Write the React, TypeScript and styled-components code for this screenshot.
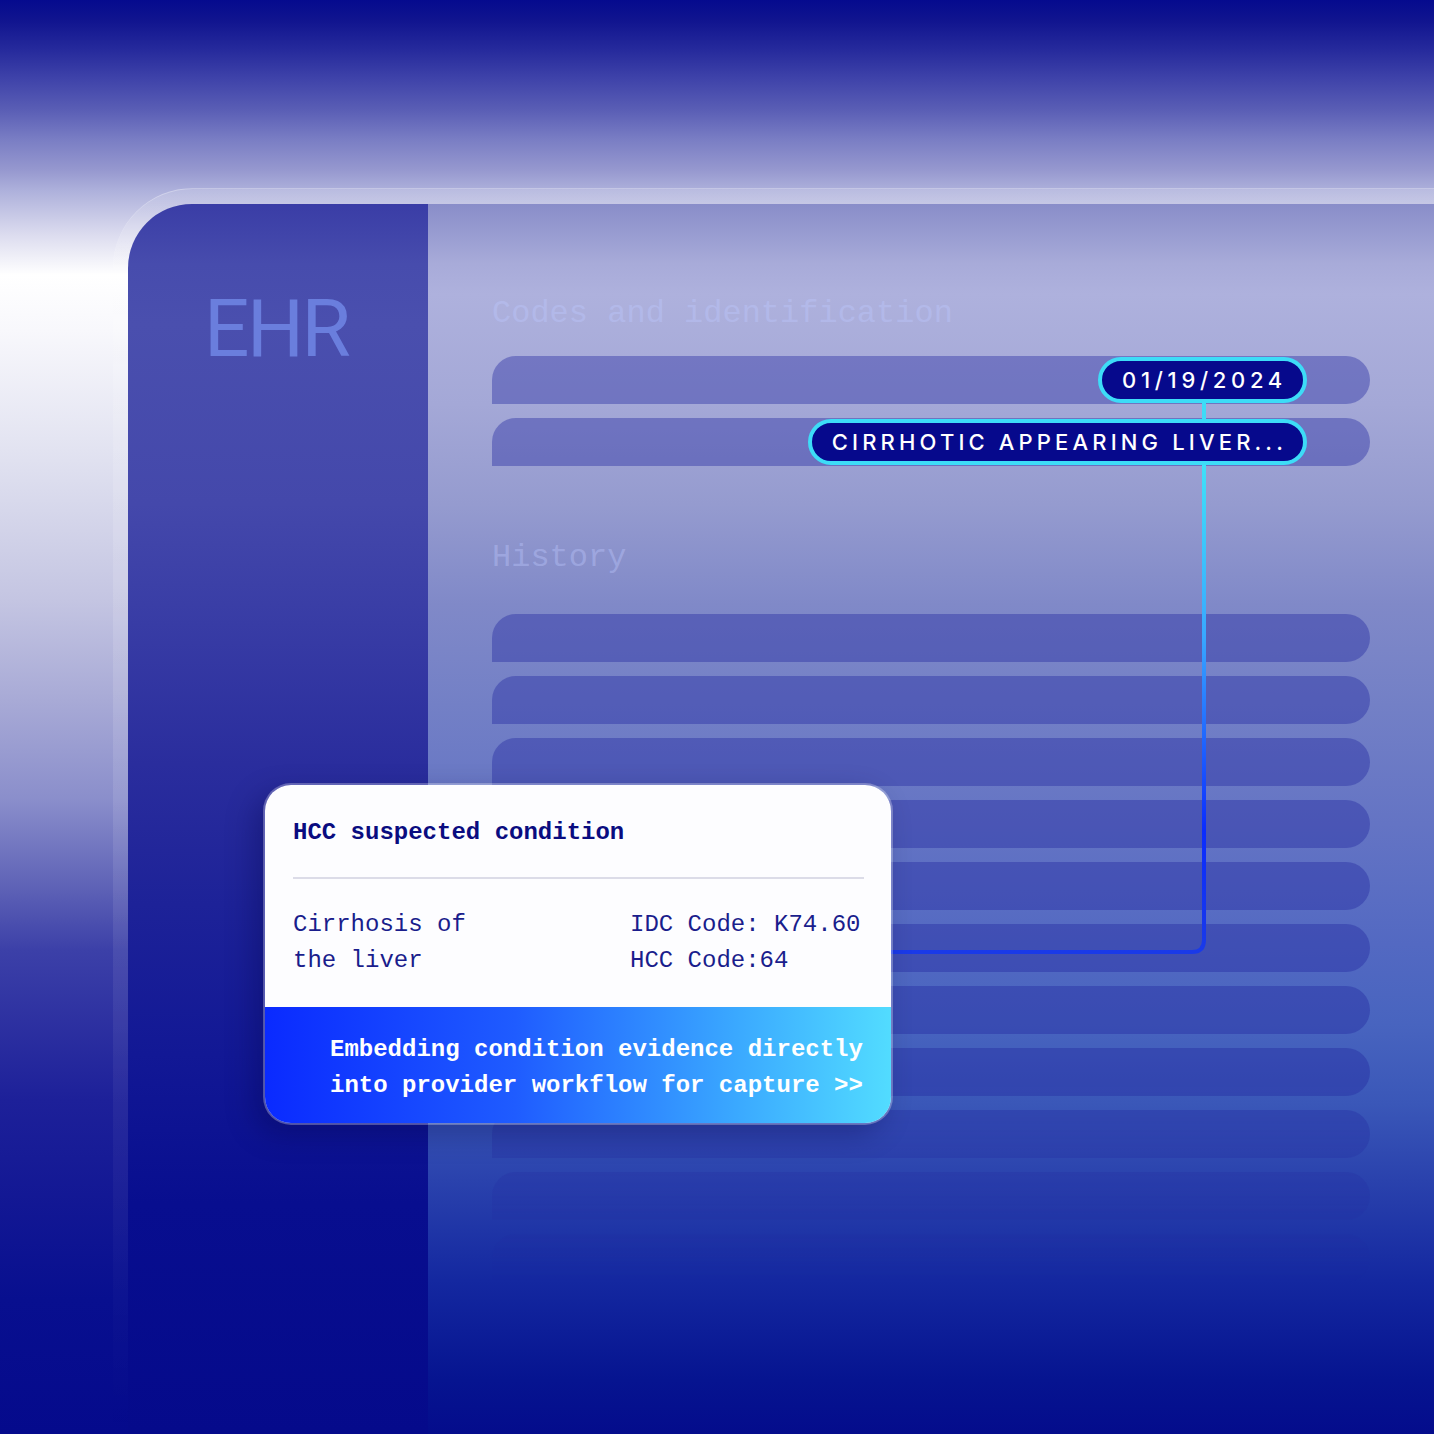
import React from 'react';
import styled, { createGlobalStyle } from 'styled-components';

const GlobalStyle = createGlobalStyle`
  html, body {
    margin: 0;
    padding: 0;
    background: #050a8c;
  }
  #root {
    width: 1434px;
    height: 1434px;
  }
`;

const Scene = styled.div`
  position: relative;
  width: 1434px;
  height: 1434px;
  overflow: hidden;
  box-sizing: border-box;
  padding: 188px 0 0 113px;
  display: flex;
  background: linear-gradient(180deg,
    #050a8e 0px, #10148f 20px, #262a9c 50px, #4044aa 80px, #5a5eb5 110px,
    #7a7ec4 140px, #9698cf 170px, #adb0db 190px, #dcdcef 235px, #ffffff 275px,
    #f8f8fc 330px, #e2e3f1 450px, #c4c5e2 600px, #a8aad6 700px, #8a8ecb 800px,
    #6266b8 880px, #3c40a8 950px, #1d2099 1100px, #080f8f 1300px, #050a8c 1434px);
`;

const GlassFrame = styled.div`
  flex: 1;
  display: flex;
  box-sizing: border-box;
  padding: 15px 0 0 15px;
  border-top: 1px solid rgba(255, 255, 255, 0.3);
  border-top-left-radius: 80px;
  background: linear-gradient(180deg,
    rgba(255, 255, 255, 0.16) 0px,
    rgba(255, 255, 255, 0.12) 500px,
    rgba(255, 255, 255, 0.05) 900px,
    rgba(255, 255, 255, 0) 1246px);
`;

const Panel = styled.div`
  flex: 1;
  display: flex;
  border-top-left-radius: 64px;
  overflow: hidden;
`;

const Sidebar = styled.div`
  width: 300px;
  flex-shrink: 0;
  box-sizing: border-box;
  padding: 85px 0 0 76px;
  background: linear-gradient(180deg,
    #3a3da6 0px, #474cad 60px, #4a4fae 120px, #4448ab 300px, #383ca5 420px,
    #2a2d9d 560px, #1d2298 700px, #121895 850px, #080e8f 1000px, #050a8b 1230px);
`;

const Logo = styled.div`
  font-family: Roboto, 'Liberation Sans', sans-serif;
  font-size: 80px;
  line-height: 1;
  letter-spacing: -2.5px;
  color: #6a7edd;
`;

const Content = styled.div`
  flex: 1;
  display: flex;
  flex-direction: column;
  box-sizing: border-box;
  padding: 94px 64px 0;
  background: linear-gradient(180deg,
    #898dc9 0px, #a8abd9 60px, #aeb1dd 90px, #a4a8d7 200px, #959bcf 300px,
    #8089c8 400px, #7380c6 500px, #6474c4 620px, #5369c2 740px, #4864bf 820px,
    #3a57b8 900px, #2a42ad 976px, #1428a0 1076px, #061490 1176px, #040c8c 1230px);
`;

const SectionTitle = styled.div<{ $gap: number }>`
  margin-top: ${(props) => props.$gap}px;
  font-family: 'Liberation Mono', 'DejaVu Sans Mono', monospace;
  font-size: 32px;
  line-height: 32px;
  color: rgba(190, 200, 255, 0.4);
`;

const BarList = styled.div<{ $gap: number }>`
  margin-top: ${(props) => props.$gap}px;
  display: flex;
  flex-direction: column;
  gap: 14px;
`;

const FadingBarList = styled(BarList)`
  -webkit-mask-image: linear-gradient(180deg, #000 0px, #000 470px, transparent 680px);
  mask-image: linear-gradient(180deg, #000 0px, #000 470px, transparent 680px);
`;

const Bar = styled.div`
  height: 48px;
  flex-shrink: 0;
  box-sizing: border-box;
  display: flex;
  justify-content: flex-end;
  align-items: center;
  padding-right: 63px;
  border-radius: 24px 24px 24px 0;
  background: rgba(35, 40, 160, 0.4);
`;

const Pill = styled.div<{ $tracking: number }>`
  height: 46px;
  box-sizing: border-box;
  display: flex;
  align-items: center;
  padding: 0 16px 0 20px;
  border: 4px solid #3ddcf7;
  border-radius: 23px;
  background: #06098c;
  color: #ffffff;
  font-family: Inter, 'Noto Sans', sans-serif;
  font-size: 22px;
  font-weight: 500;
  letter-spacing: ${(props) => props.$tracking}px;
  white-space: nowrap;
`;

const ConnectorSvg = styled.svg`
  position: absolute;
  left: 0;
  top: 0;
  pointer-events: none;
`;

const Card = styled.div`
  position: absolute;
  left: 263px;
  top: 783px;
  width: 630px;
  box-sizing: border-box;
  border: 2px solid rgba(255, 255, 255, 0.28);
  border-radius: 28px;
  background: #fdfdff;
  background-clip: padding-box;
  overflow: hidden;
  box-shadow: -10px 10px 28px rgba(0, 4, 60, 0.28);
  font-family: 'Liberation Mono', 'DejaVu Sans Mono', monospace;
  font-size: 24px;
  line-height: 36px;
`;

const CardBody = styled.div`
  padding: 30px 27px 28px 28px;
  color: #1a1d8c;
`;

const CardTitle = styled.div`
  font-weight: 700;
  color: #0a0c80;
`;

const Divider = styled.div`
  height: 2px;
  margin: 26px 0 28px;
  background: #dcdce8;
`;

const DetailRow = styled.div`
  display: flex;
  justify-content: space-between;
  align-items: flex-start;
`;

const ConditionName = styled.div`
  max-width: 190px;
`;

const Codes = styled.div`
  width: 234px;
`;

const CardFooter = styled.div`
  padding: 25px 20px 19px 65px;
  background: linear-gradient(90deg, #0a2aff 0%, #1f5cff 40%, #3aa8ff 75%, #52dcff 100%);
  color: #ffffff;
  font-weight: 700;
`;

function Connector(): React.ReactElement {
  return (
    <ConnectorSvg width='1434' height='1434' viewBox='0 0 1434 1434'>
      <defs>
        <linearGradient id='lineFade' gradientUnits='userSpaceOnUse' x1='0' y1='466' x2='0' y2='952'>
          <stop offset='0' stopColor='#3fe0f8' />
          <stop offset='0.35' stopColor='#38a8ff' />
          <stop offset='0.75' stopColor='#0a2cff' />
          <stop offset='1' stopColor='#1a3ae8' />
        </linearGradient>
      </defs>
      <path d='M1204 403 L1204 419' stroke='#3ddcf7' strokeWidth='4' fill='none' />
      <path d='M1204 465 L1204 940 Q1204 952 1192 952 L880 952' stroke='url(#lineFade)' strokeWidth='4' fill='none' />
    </ConnectorSvg>
  );
}

export default function App(): React.ReactElement {
  const historyRows = Array.from({ length: 11 }, (_, index) => index);
  return (
    <>
      <GlobalStyle />
      <Scene>
        <GlassFrame>
          <Panel>
            <Sidebar>
              <Logo>EHR</Logo>
            </Sidebar>
            <Content>
              <SectionTitle $gap={0}>Codes and identification</SectionTitle>
              <BarList $gap={26}>
                <Bar>
                  <Pill $tracking={4.7}>01/19/2024</Pill>
                </Bar>
                <Bar>
                  <Pill $tracking={4.15}>CIRRHOTIC APPEARING LIVER...</Pill>
                </Bar>
              </BarList>
              <SectionTitle $gap={76}>History</SectionTitle>
              <FadingBarList $gap={40}>
                {historyRows.map((row) => (
                  <Bar key={row} />
                ))}
              </FadingBarList>
            </Content>
          </Panel>
        </GlassFrame>
        <Connector />
        <Card>
          <CardBody>
            <CardTitle>HCC suspected condition</CardTitle>
            <Divider />
            <DetailRow>
              <ConditionName>Cirrhosis of the liver</ConditionName>
              <Codes>
                IDC Code: K74.60
                <br />
                HCC Code:64
              </Codes>
            </DetailRow>
          </CardBody>
          <CardFooter>
            Embedding condition evidence directly into provider workflow for capture &gt;&gt;
          </CardFooter>
        </Card>
      </Scene>
    </>
  );
}
